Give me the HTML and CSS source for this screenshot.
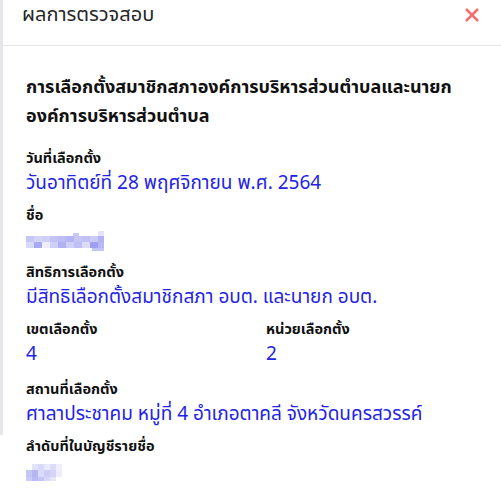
FILE: index.html
```html
<!DOCTYPE html>
<html lang="th">
<head>
<meta charset="utf-8">
<link rel="stylesheet" href="styles.css">
</head>
<body>
<div class="backdrop"></div>
<div class="modal">
  <div class="modal-header">
    <div class="modal-title">ผลการตรวจสอบ</div>
    <div class="close" aria-label="close">
      <svg width="16" height="16" viewBox="0 0 16 16"><path d="M2 2 L14 14 M14 2 L2 14" stroke="#f46f6f" stroke-width="2.6" stroke-linecap="butt"/></svg>
    </div>
  </div>
  <div class="modal-body">
    <h2 class="election">การเลือกตั้งสมาชิกสภาองค์การบริหารส่วนตำบลและนายกองค์การบริหารส่วนตำบล</h2>
    <div class="field">
      <div class="label">วันที่เลือกตั้ง</div>
      <div class="value">วันอาทิตย์ที่ 28 พฤศจิกายน พ.ศ. 2564</div>
    </div>
    <div class="field">
      <div class="label">ชื่อ</div>
      <div class="value blur">
        <svg width="80" height="20" viewBox="0 0 80 20">
          <rect x="47" y="2" width="6" height="3" fill="#c9c9f7"/>
          <rect x="72" y="0" width="6" height="5" fill="#e4e4fb"/>
          <rect x="0" y="5" width="8" height="6" fill="#c7c7f6"/>
          <rect x="8" y="5" width="8" height="6" fill="#d3d3f8"/>
          <rect x="16" y="5" width="8" height="6" fill="#cfcff7"/>
          <rect x="24" y="5" width="8" height="6" fill="#c3c3f5"/>
          <rect x="32" y="5" width="8" height="6" fill="#bdbdf5"/>
          <rect x="40" y="5" width="8" height="6" fill="#b5b5f3"/>
          <rect x="48" y="5" width="8" height="6" fill="#c6c6f6"/>
          <rect x="56" y="5" width="8" height="6" fill="#c0c0f5"/>
          <rect x="64" y="5" width="8" height="6" fill="#cacaf7"/>
          <rect x="72" y="5" width="6" height="6" fill="#b3b3f3"/>
          <rect x="0" y="11" width="8" height="6" fill="#d9d9f9"/>
          <rect x="8" y="11" width="8" height="6" fill="#a9a9f1"/>
          <rect x="16" y="11" width="8" height="6" fill="#ededfc"/>
          <rect x="24" y="11" width="8" height="6" fill="#cfcff7"/>
          <rect x="32" y="11" width="8" height="6" fill="#b1b1f3"/>
          <rect x="40" y="11" width="8" height="6" fill="#d0d0f8"/>
          <rect x="48" y="11" width="8" height="6" fill="#bfbff5"/>
          <rect x="56" y="11" width="8" height="6" fill="#dcdcf9"/>
          <rect x="64" y="11" width="8" height="6" fill="#9f9ff0"/>
          <rect x="72" y="11" width="6" height="6" fill="#b8b8f4"/>
          <rect x="66" y="17" width="12" height="3" fill="#c4c4f6"/>
        </svg>
      </div>
    </div>
    <div class="field">
      <div class="label">สิทธิการเลือกตั้ง</div>
      <div class="value">มีสิทธิเลือกตั้งสมาชิกสภา อบต. และนายก อบต.</div>
    </div>
    <div class="row">
      <div class="field">
        <div class="label">เขตเลือกตั้ง</div>
        <div class="value">4</div>
      </div>
      <div class="field">
        <div class="label">หน่วยเลือกตั้ง</div>
        <div class="value">2</div>
      </div>
    </div>
    <div class="field">
      <div class="label">สถานที่เลือกตั้ง</div>
      <div class="value">ศาลาประชาคม หมู่ที่ 4 อำเภอตาคลี จังหวัดนครสวรรค์</div>
    </div>
    <div class="field">
      <div class="label">ลำดับที่ในบัญชีรายชื่อ</div>
      <div class="value blur">
        <svg width="36" height="20" viewBox="0 0 36 20">
          <rect x="6" y="2" width="6" height="6" fill="#e2e2fb"/>
          <rect x="12" y="2" width="6" height="6" fill="#d8d8f9"/>
          <rect x="18" y="2" width="6" height="6" fill="#e9e9fc"/>
          <rect x="24" y="2" width="6" height="6" fill="#dcdcfa"/>
          <rect x="30" y="2" width="6" height="6" fill="#eeeefd"/>
          <rect x="0" y="8" width="6" height="7" fill="#c6c6f6"/>
          <rect x="6" y="8" width="6" height="7" fill="#b6b6f4"/>
          <rect x="12" y="8" width="6" height="7" fill="#dcdcfa"/>
          <rect x="18" y="8" width="6" height="7" fill="#cdcdf7"/>
          <rect x="24" y="8" width="6" height="7" fill="#d4d4f8"/>
          <rect x="30" y="8" width="6" height="7" fill="#ececfc"/>
          <rect x="0" y="15" width="6" height="4" fill="#cbcbf7"/>
          <rect x="6" y="15" width="6" height="4" fill="#bcbcf5"/>
          <rect x="12" y="15" width="6" height="4" fill="#c4c4f6"/>
          <rect x="18" y="15" width="6" height="4" fill="#d7d7f9"/>
          <rect x="24" y="15" width="6" height="4" fill="#e6e6fb"/>
        </svg>
      </div>
    </div>
  </div>
</div>
</body>
</html>
```
FILE: styles.css
```css
html, body {
  margin: 0;
  padding: 0;
  background: #ffffff;
  width: 501px;
  height: 497px;
  overflow: hidden;
}
body {
  position: relative;
  font-family: "Tahoma", "Noto Sans Thai", "Leelawadee UI", "Noto Sans", sans-serif;
  color: #111;
}
.backdrop {
  position: absolute;
  left: 0;
  top: 0;
  width: 3px;
  height: 434px;
  background: #e6e6ea;
  border-bottom: 1px solid #e6e6ea;
}
.modal {
  margin-left: 3px;
  background: #fff;
}
.modal-header {
  display: flex;
  justify-content: space-between;
  align-items: center;
  height: 30px;
  padding: 0 21px 15px 19px;
  border-bottom: 1px solid #e6e6e6;
}
.modal-title {
  font-size: 20px;
  color: #262626;
}
.close {
  width: 16px;
  height: 16px;
  display: flex;
}
.modal-body {
  padding: 27px 20px 0 23px;
}
.election {
  margin: 0 0 18px;
  font-size: 18px;
  font-weight: bold;
  line-height: 29px;
  color: #111;
}
.field {
  margin-bottom: 7px;
}
.label {
  font-size: 14.5px;
  font-weight: bold;
  line-height: 20px;
  color: #111;
}
.value {
  font-size: 19px;
  line-height: 30px;
  color: #2323e6;
}
.value.blur {
  height: 30px;
  display: flex;
  align-items: center;
}
.row {
  display: grid;
  grid-template-columns: 240px 1fr;
  margin-bottom: 3px;
}
```
